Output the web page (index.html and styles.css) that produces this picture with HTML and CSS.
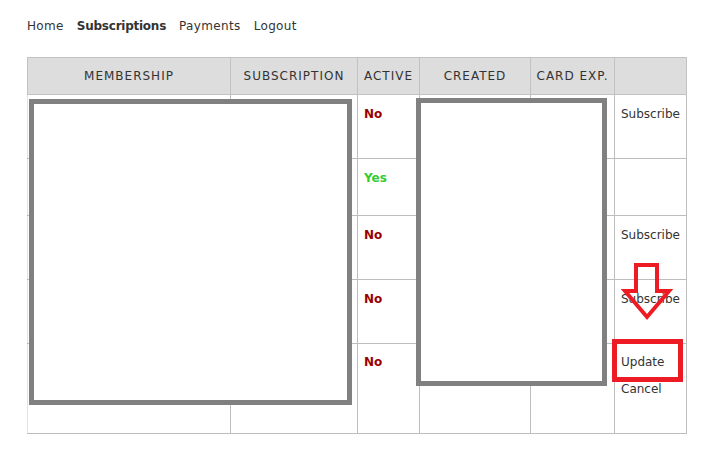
FILE: index.html
```html
<!DOCTYPE html>
<html>
<head>
<meta charset="utf-8">
<link rel="stylesheet" href="styles.css">
</head>
<body>
<nav class="nav">
  <a href="#">Home</a>
  <a href="#" class="current">Subscriptions</a>
  <a href="#">Payments</a>
  <a href="#">Logout</a>
</nav>
<table class="subs">
  <colgroup>
    <col class="c-mem"><col class="c-sub"><col class="c-act"><col class="c-cre"><col class="c-card"><col class="c-ops">
  </colgroup>
  <thead>
    <tr><th>Membership</th><th>Subscription</th><th>Active</th><th>Created</th><th>Card exp.</th><th></th></tr>
  </thead>
  <tbody>
    <tr class="r-64"><td></td><td></td><td><span class="no">No</span></td><td></td><td></td><td><a href="#">Subscribe</a></td></tr>
    <tr class="r-57"><td></td><td></td><td><span class="yes">Yes</span></td><td></td><td></td><td></td></tr>
    <tr class="r-64"><td></td><td></td><td><span class="no">No</span></td><td></td><td></td><td><a href="#">Subscribe</a></td></tr>
    <tr class="r-64"><td></td><td></td><td><span class="no">No</span></td><td></td><td></td><td><a href="#">Subscribe</a></td></tr>
    <tr class="r-90"><td></td><td></td><td><span class="no">No</span></td><td></td><td></td><td><a href="#" class="stack">Update</a><a href="#" class="stack">Cancel</a></td></tr>
  </tbody>
</table>

<div class="redact redact-left"></div>
<div class="redact redact-mid"></div>
<div class="mark-box"></div>
<svg class="mark-arrow" width="70" height="75" viewBox="0 0 70 75">
  <polygon points="26,10 47,10 47,36 59,36 37,62 15,36 26,36" fill="none" stroke="#ed1c24" stroke-width="4" stroke-linejoin="miter"/>
</svg>
</body>
</html>
```
FILE: styles.css
```css
html, body {
  margin: 0;
  padding: 0;
  background: #fff;
}
body {
  font-family: "DejaVu Sans", Verdana, sans-serif;
  font-size: 12px;
  color: #333;
  position: relative;
  width: 719px;
  height: 459px;
  overflow: hidden;
}
a {
  color: #333;
  text-decoration: none;
}
.nav {
  display: flex;
  gap: 13px;
  padding: 19px 0 0 27px;
  line-height: 15px;
}
.nav a {
  letter-spacing: 0.35px;
}
.nav .current {
  font-weight: bold;
  letter-spacing: -0.25px;
}
.subs {
  margin: 23px 0 0 27px;
  border-collapse: collapse;
  table-layout: fixed;
  width: 659px;
}
.c-mem { width: 203px; }
.c-sub { width: 127px; }
.c-act { width: 62px; }
.c-cre { width: 111px; }
.c-card { width: 84px; }
.c-ops { width: 72px; }

.subs th {
  background: #dddddd;
  border: 1px solid #c2c2c2;
  height: 36px;
  padding: 0;
  font-weight: normal;
  text-transform: uppercase;
  letter-spacing: 1px;
  text-align: center;
  line-height: 15px;
  white-space: nowrap;
}
.subs td {
  border: 1px solid #bdbdbd;
  vertical-align: top;
  padding: 12px 0 0 6px;
  line-height: 15px;
}
.subs td:first-child {
  border-left-color: #e2e2e2;
}
.r-64 td { height: 51px; }
.r-57 td { height: 44px; }
.r-90 td { height: 78px; padding-top: 11px; }

.no {
  color: #990000;
  font-weight: bold;
}
.yes {
  color: #33cc33;
  font-weight: bold;
}
.stack {
  display: block;
  margin-bottom: 12px;
}

.redact {
  position: absolute;
  border: 5px solid #808080;
  background: #fff;
  box-sizing: border-box;
}
.redact-left {
  left: 29px;
  top: 99px;
  width: 323px;
  height: 306px;
}
.redact-mid {
  left: 416px;
  top: 98px;
  width: 191px;
  height: 288px;
}
.mark-box {
  position: absolute;
  left: 612px;
  top: 339px;
  width: 71px;
  height: 43px;
  box-sizing: border-box;
  border: 5px solid #ed1c24;
}
.mark-arrow {
  position: absolute;
  left: 610px;
  top: 255px;
}
```
